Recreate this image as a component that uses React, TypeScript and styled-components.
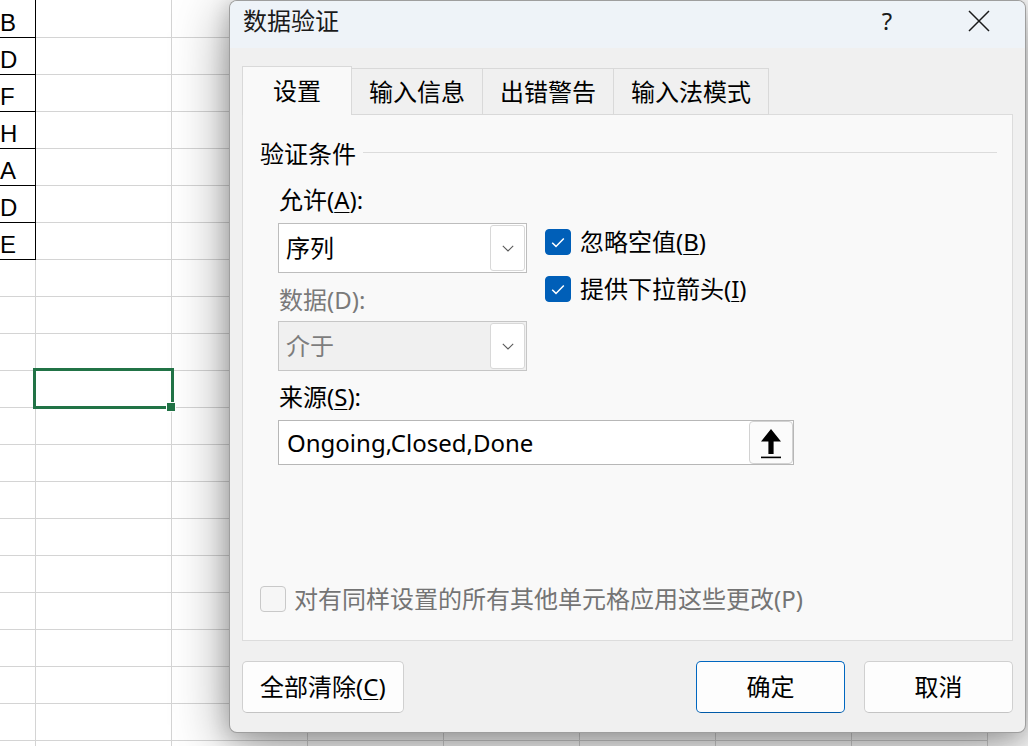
import React from "react";
import styled, { createGlobalStyle } from "styled-components";

const GlobalStyle = createGlobalStyle`
  html, body { margin: 0; padding: 0; background: #ffffff; overflow: hidden; }
  body { width: 1028px; height: 746px; font-family: "Noto Sans", "Noto Sans CJK SC", sans-serif; }
`;

const Screen = styled.div`
  position: relative;
  width: 1028px;
  height: 746px;
  overflow: hidden;
  background: #ffffff;
`;

const Sheet = styled.div`
  position: relative;
  display: grid;
  grid-template-columns: 36px repeat(7, 136px);
  grid-template-rows: 38px;
  grid-auto-rows: 37px;
  width: 1028px;
  height: 746px;
  overflow: hidden;
`;

const Cell = styled.div<{ $boxed?: boolean }>`
  box-sizing: border-box;
  border-right: 1px solid ${(p) => (p.$boxed ? "#000000" : "#d4d4d4")};
  border-bottom: 1px solid ${(p) => (p.$boxed ? "#000000" : "#d4d4d4")};
  display: flex;
  align-items: flex-end;
  padding-bottom: 2px;
  font-family: "Liberation Sans", Arial, sans-serif;
  font-size: 24px;
  line-height: 1;
  color: #000;
  overflow: hidden;
`;

const Selection = styled.div`
  position: absolute;
  left: 33px;
  top: 368px;
  width: 141px;
  height: 41px;
  box-sizing: border-box;
  border: 3px solid #217346;
`;

const FillHandle = styled.div`
  position: absolute;
  left: 166px;
  top: 402px;
  width: 10px;
  height: 10px;
  box-sizing: border-box;
  border: 1px solid #ffffff;
  background: #217346;
`;

const Dialog = styled.div`
  position: absolute;
  left: 229px;
  top: 0;
  width: 797px;
  height: 733px;
  box-sizing: border-box;
  border: 1px solid rgba(0, 0, 0, 0.34);
  border-radius: 8px;
  background: #f0f0f0;
  box-shadow: 0 12px 56px rgba(0, 0, 0, 0.42), -2px 4px 20px rgba(0, 0, 0, 0.16);
  display: flex;
  flex-direction: column;
  overflow: hidden;
  font-family: "Noto Sans", "Noto Sans CJK SC", sans-serif;
  font-size: 24px;
  color: #000;
`;

const TitleBar = styled.div`
  height: 47px;
  box-sizing: border-box;
  background: #eef3f8;
  display: flex;
  align-items: flex-start;
  padding: 4px 0 0 13px;
`;

const Title = styled.div`
  font-size: 24px;
  line-height: 32px;
  color: #1a1a1a;
`;

const CaptionButtons = styled.div`
  margin-left: auto;
  display: flex;
`;

const CaptionButton = styled.div`
  width: 92px;
  height: 32px;
  display: flex;
  align-items: center;
  justify-content: center;
  font-size: 24px;
  line-height: 32px;
  color: #1a1a1a;
`;

const Body = styled.div`
  display: flex;
  flex-direction: column;
  padding: 18px 12px 19px 12px;
`;

const TabRow = styled.div`
  display: flex;
  align-items: flex-end;
  height: 49px;
  margin-bottom: -1px;
  position: relative;
  z-index: 1;
`;

const Tab = styled.div<{ $active?: boolean }>`
  box-sizing: border-box;
  height: ${(p) => (p.$active ? "49px" : "47px")};
  min-width: ${(p) => (p.$active ? "110px" : "0")};
  padding: 0 17px;
  margin-right: -1px;
  display: flex;
  align-items: center;
  justify-content: center;
  border: 1px solid #d9d9d9;
  border-bottom: ${(p) => (p.$active ? "none" : "1px solid #d9d9d9")};
  background: ${(p) => (p.$active ? "#f9f9f9" : "#f0f0f0")};
  font-size: 24px;
  line-height: 32px;
  position: relative;
  z-index: ${(p) => (p.$active ? 2 : 1)};
`;

const Panel = styled.div`
  height: 527px;
  box-sizing: border-box;
  border: 1px solid #dcdcdc;
  background: #f9f9f9;
  display: flex;
  flex-direction: column;
  padding: 23px 15px 25px 17px;
`;

const GroupHeader = styled.div`
  display: flex;
  align-items: center;
  height: 32px;
`;

const GroupTitle = styled.div`
  font-size: 24px;
  line-height: 32px;
`;

const GroupLine = styled.div`
  flex: 1;
  height: 1px;
  background: #dcdcdc;
  margin: -4px 0 0 7px;
`;

const FormArea = styled.div`
  margin-left: 18px;
  display: flex;
  flex-direction: column;
`;

const TopRow = styled.div`
  display: flex;
  margin-top: 14px;
`;

const LeftCol = styled.div`
  width: 249px;
  display: flex;
  flex-direction: column;
`;

const FieldLabel = styled.div<{ $disabled?: boolean; $gap?: number }>`
  font-size: 24px;
  line-height: 32px;
  padding-left: 1px;
  margin-top: ${(p) => p.$gap ?? 0}px;
  color: ${(p) => (p.$disabled ? "#7a7a7a" : "#000")};
`;

const SelectBox = styled.div<{ $disabled?: boolean; $gap: number }>`
  height: 50px;
  box-sizing: border-box;
  margin-top: ${(p) => p.$gap}px;
  border: 1px solid ${(p) => (p.$disabled ? "#c6c6c6" : "#bdbdbd")};
  background: ${(p) => (p.$disabled ? "#f0f0f0" : "#ffffff")};
  display: flex;
  align-items: center;
  padding-left: 7px;
  color: ${(p) => (p.$disabled ? "#7d7d7d" : "#000")};
  font-size: 24px;
  line-height: 32px;
`;

const DropButton = styled.div`
  align-self: stretch;
  width: 35px;
  margin: 1px 1px 1px auto;
  box-sizing: border-box;
  border: 1px solid #d8d8d8;
  border-radius: 3px;
  background: #ffffff;
  display: flex;
  align-items: center;
  justify-content: center;
`;

const RightCol = styled.div`
  margin-left: 18px;
  padding-top: 45px;
  display: flex;
  flex-direction: column;
  gap: 21px;
`;

const CheckRow = styled.div<{ $disabled?: boolean }>`
  display: flex;
  align-items: center;
  height: 26px;
  gap: ${(p) => (p.$disabled ? 8 : 9)}px;
  font-size: 24px;
  line-height: 32px;
  color: ${(p) => (p.$disabled ? "#747474" : "#000")};
  white-space: nowrap;
`;

const CheckBox = styled.div<{ $checked?: boolean }>`
  width: 26px;
  height: 26px;
  box-sizing: border-box;
  border-radius: 4px;
  border: 1px solid ${(p) => (p.$checked ? "#005fb8" : "#c9c9c9")};
  background: ${(p) => (p.$checked ? "#005fb8" : "#f6f6f6")};
  display: flex;
  align-items: center;
  justify-content: center;
  flex-shrink: 0;
`;

const SourceInput = styled.div`
  width: 516px;
  height: 45px;
  box-sizing: border-box;
  margin-top: 7px;
  border: 1px solid #b7b7b7;
  background: #ffffff;
  display: flex;
  align-items: center;
  padding-left: 8px;
  font-size: 24px;
  line-height: 32px;
`;

const RefButton = styled.div`
  margin-left: auto;
  align-self: stretch;
  width: 44px;
  box-sizing: border-box;
  border: 1px solid #d2d2d2;
  border-radius: 4px;
  background: #fbfbfb;
  display: flex;
  align-items: center;
  justify-content: center;
  padding-top: 2px;
`;

const BottomCheck = styled.div`
  margin-top: auto;
  height: 32px;
  display: flex;
  align-items: center;
`;

const Footer = styled.div`
  display: flex;
  margin-top: 20px;
`;

const Button = styled.div<{ $primary?: boolean; $width?: number }>`
  height: 52px;
  box-sizing: border-box;
  min-width: ${(p) => p.$width ?? 0}px;
  padding: 0 17px;
  border: 1px solid ${(p) => (p.$primary ? "#0067c0" : "#d0d0d0")};
  border-bottom-color: ${(p) => (p.$primary ? "#005aa8" : "#c4c4c4")};
  border-radius: 5px;
  background: #fdfdfd;
  display: flex;
  align-items: center;
  justify-content: center;
  font-size: 24px;
  line-height: 32px;
`;

const RightButtons = styled.div`
  margin-left: auto;
  display: flex;
  gap: 19px;
`;

const U = styled.span`
  text-decoration: underline;
  text-underline-offset: 3px;
  text-decoration-thickness: 1px;
`;

const Chevron = () => (
  <svg width="12" height="7" viewBox="0 0 12 7">
    <path d="M0.8 0.8 L6 6 L11.2 0.8" fill="none" stroke="#5a5a5a" strokeWidth="1.1" />
  </svg>
);

const Check = () => (
  <svg width="14" height="11" viewBox="0 0 14 11">
    <path d="M1.2 5.8 L5 9.4 L12.8 1.4" fill="none" stroke="#ffffff" strokeWidth="1.5" />
  </svg>
);

const CloseIcon = () => (
  <svg width="22" height="22" viewBox="0 0 22 22">
    <path d="M1 1 L21 21 M21 1 L1 21" fill="none" stroke="#1a1a1a" strokeWidth="1.5" />
  </svg>
);

const UploadIcon = () => (
  <svg width="20" height="30" viewBox="0 0 20 30">
    <polygon points="10,0 20,12.5 12.6,12.5 12.6,25 7.4,25 7.4,12.5 0,12.5" fill="#000" />
    <rect x="0" y="27.6" width="20" height="1.6" fill="#000" />
  </svg>
);

const letters = ["B", "D", "F", "H", "A", "D", "E"];
const ROWS = 21;
const COLS = 8;

export default function App() {
  const cells: React.ReactNode[] = [];
  for (let r = 0; r < ROWS; r++) {
    for (let c = 0; c < COLS; c++) {
      const boxed = c === 0 && r < letters.length;
      cells.push(
        <Cell key={`${r}-${c}`} $boxed={boxed}>
          {boxed ? letters[r] : null}
        </Cell>
      );
    }
  }

  return (
    <Screen>
      <GlobalStyle />
      <Sheet>
        {cells}
        <Selection />
        <FillHandle />
      </Sheet>
      <Dialog>
        <TitleBar>
          <Title>数据验证</Title>
          <CaptionButtons>
            <CaptionButton>?</CaptionButton>
            <CaptionButton>
              <CloseIcon />
            </CaptionButton>
          </CaptionButtons>
        </TitleBar>
        <Body>
          <TabRow>
            <Tab $active>设置</Tab>
            <Tab>输入信息</Tab>
            <Tab>出错警告</Tab>
            <Tab>输入法模式</Tab>
          </TabRow>
          <Panel>
            <GroupHeader>
              <GroupTitle>验证条件</GroupTitle>
              <GroupLine />
            </GroupHeader>
            <FormArea>
              <TopRow>
                <LeftCol>
                  <FieldLabel>
                    允许(<U>A</U>):
                  </FieldLabel>
                  <SelectBox $gap={7}>
                    序列
                    <DropButton>
                      <Chevron />
                    </DropButton>
                  </SelectBox>
                  <FieldLabel $disabled $gap={11}>
                    数据(D):
                  </FieldLabel>
                  <SelectBox $disabled $gap={5}>
                    介于
                    <DropButton>
                      <Chevron />
                    </DropButton>
                  </SelectBox>
                </LeftCol>
                <RightCol>
                  <CheckRow>
                    <CheckBox $checked>
                      <Check />
                    </CheckBox>
                    <span>
                      忽略空值(<U>B</U>)
                    </span>
                  </CheckRow>
                  <CheckRow>
                    <CheckBox $checked>
                      <Check />
                    </CheckBox>
                    <span>
                      提供下拉箭头(<U>I</U>)
                    </span>
                  </CheckRow>
                </RightCol>
              </TopRow>
              <FieldLabel $gap={10}>
                来源(<U>S</U>):
              </FieldLabel>
              <SourceInput>
                Ongoing,Closed,Done
                <RefButton>
                  <UploadIcon />
                </RefButton>
              </SourceInput>
            </FormArea>
            <BottomCheck>
              <CheckRow $disabled>
                <CheckBox />
                <span>对有同样设置的所有其他单元格应用这些更改(P)</span>
              </CheckRow>
            </BottomCheck>
          </Panel>
          <Footer>
            <Button>
              全部清除(<U>C</U>)
            </Button>
            <RightButtons>
              <Button $primary $width={149}>
                确定
              </Button>
              <Button $width={149}>取消</Button>
            </RightButtons>
          </Footer>
        </Body>
      </Dialog>
    </Screen>
  );
}
